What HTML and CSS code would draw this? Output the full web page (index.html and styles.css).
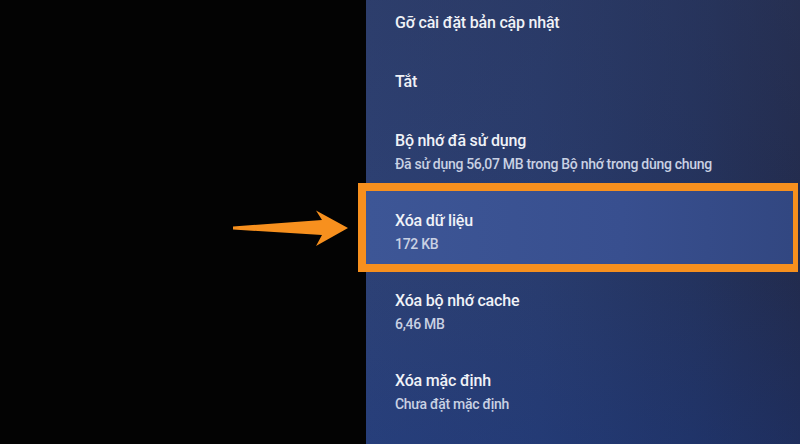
FILE: index.html
```html
<!DOCTYPE html>
<html lang="vi">
<head>
<meta charset="utf-8">
<link rel="stylesheet" href="styles.css">
</head>
<body>
<div class="screen">
  <div class="left">
    <svg class="arrow" width="366" height="444" viewBox="0 0 366 444">
      <path d="M233 226.5 L322 220 L316 210.5 L348 228 L316 246 L322 235 L233 229.5 Z" fill="#f7901e"/>
    </svg>
  </div>
  <div class="panel">
    <div class="row">
      <div class="title">Gỡ cài đặt bản cập nhật</div>
    </div>
    <div class="row">
      <div class="title">Tắt</div>
    </div>
    <div class="row two">
      <div class="title">Bộ nhớ đã sử dụng</div>
      <div class="sub">Đã sử dụng 56,07 MB trong Bộ nhớ trong dùng chung</div>
    </div>
    <div class="row two active">
      <div class="title">Xóa dữ liệu</div>
      <div class="sub">172 KB</div>
    </div>
    <div class="row two">
      <div class="title">Xóa bộ nhớ cache</div>
      <div class="sub">6,46 MB</div>
    </div>
    <div class="row two">
      <div class="title">Xóa mặc định</div>
      <div class="sub">Chưa đặt mặc định</div>
    </div>
  </div>
</div>
</body>
</html>
```
FILE: styles.css
```css
html, body {
  margin: 0;
  padding: 0;
  background: #000;
}
.screen {
  width: 800px;
  height: 444px;
  overflow: hidden;
  display: flex;
  background: #030303;
  font-family: Roboto, "Noto Sans", sans-serif;
}
.left {
  width: 366px;
  flex: none;
  position: relative;
  z-index: 2;
}
.arrow {
  position: absolute;
  left: 0;
  top: 0;
}
.panel {
  flex: 1;
  display: flex;
  flex-direction: column;
  position: relative;
  isolation: isolate;
  background:
    linear-gradient(180deg, rgba(45,55,90,0.35) 0%, rgba(25,50,120,0.0) 60%, rgba(20,55,140,0.25) 100%),
    linear-gradient(90deg, #2d4175 0%, #293c6e 40%, #24335e 75%, #222b4d 100%);
}
.row {
  height: 59px;
  box-sizing: border-box;
  padding: 13px 0 0 29px;
  position: relative;
  flex: none;
}
.row.two {
  height: 80px;
}
.row.active::before {
  content: "";
  position: absolute;
  left: -8px;
  top: -15px;
  width: 440px;
  height: 89px;
  box-sizing: border-box;
  border: 8px solid #f7901e;
  border-right-width: 5px;
  background: linear-gradient(90deg, #3d5696 0%, #384f8f 60%, #324781 100%);
  z-index: -1;
}
.title {
  font-size: 16px;
  line-height: 20px;
  font-weight: 500;
  color: #f0f2f7;
  letter-spacing: -0.2px;
}
.sub {
  margin-top: 4px;
  font-size: 14px;
  line-height: 18px;
  font-weight: 500;
  color: #c9d1e3;
  letter-spacing: -0.3px;
}
```
